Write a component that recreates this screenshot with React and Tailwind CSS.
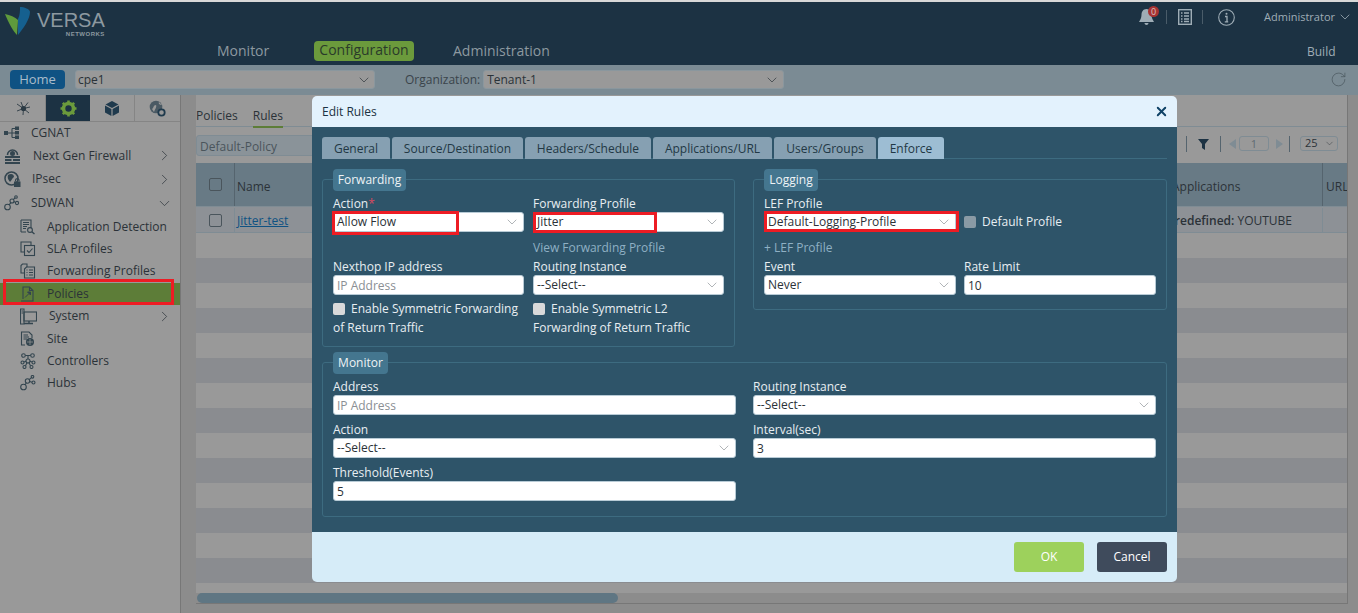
import { ChevronDown, ChevronRight, RotateCw, X } from "lucide-react";

const font = { fontFamily: '"Open Sans", "Noto Sans", sans-serif' };

// little line icons, drawn by hand since the packages don't have these
const stroke = { fill: "none", stroke: "currentColor", strokeWidth: 1.1 };

const CgnatIcon = () => (
  <svg width="16" height="14" viewBox="0 0 16 14">
    <rect x="0" y="5" width="4" height="4" fill="currentColor" />
    <path d="M4 7 H8 M8 2.5 V11.5 M8 2.5 H11 M8 7 H11 M8 11.5 H11" {...stroke} />
    <rect x="11" y="0.5" width="4" height="3.5" fill="currentColor" />
    <rect x="11" y="5" width="4" height="3.5" fill="currentColor" />
    <rect x="11" y="9.5" width="4" height="3.5" fill="currentColor" />
  </svg>
);
const FirewallIcon = () => (
  <svg width="17" height="17" viewBox="0 0 17 17">
    <path d="M3.5 8 A5 5 0 1 1 13.5 8" fill="none" stroke="currentColor" strokeWidth="1.6" />
    <circle cx="8.5" cy="6.5" r="2.5" fill="currentColor" />
    <path d="M1 9 H16 V11 H1 Z M1 12 H7.5 V14 H1 Z M9 12 H16 V14 H9 Z M1 15 H16 V17 H1 Z" fill="currentColor" />
  </svg>
);
const IpsecIcon = () => (
  <svg width="17" height="17" viewBox="0 0 17 17">
    <circle cx="7.5" cy="7.5" r="6.5" fill="none" stroke="currentColor" strokeWidth="1.5" />
    <path d="M4 4 C7 2 10 3 10 6 C8 7 8 9 6 11 C5 9 3 8 4 4 Z" fill="currentColor" />
    <rect x="10" y="10.5" width="6.5" height="5.5" fill="currentColor" />
    <path d="M11.5 10.5 V9 A1.8 1.8 0 0 1 15 9 V10.5" {...stroke} />
  </svg>
);
const NodesIcon = () => (
  <svg width="16" height="16" viewBox="0 0 16 16">
    <circle cx="3.5" cy="12" r="2.8" {...stroke} />
    <circle cx="8" cy="6" r="2" {...stroke} />
    <circle cx="13" cy="8" r="1.6" {...stroke} />
    <circle cx="12" cy="2" r="1.3" {...stroke} />
    <path d="M5 9.8 L7 7.6 M10 6.6 L11.6 7.4 M9.3 4.6 L11 2.8" {...stroke} />
  </svg>
);
const AppDetectIcon = () => (
  <svg width="16" height="16" viewBox="0 0 16 16">
    <path d="M1 1 H11 V9 M6 13 H1 Z M1 1 V13" {...stroke} />
    <path d="M3 3.5 H9 M3 5.5 H9 M3 7.5 H7 M3 9.5 H6" fill="none" stroke="currentColor" strokeWidth="1.2" />
    <circle cx="10" cy="11" r="2.4" {...stroke} />
    <path d="M11.8 12.8 L14.5 15" fill="none" stroke="currentColor" strokeWidth="1.4" />
  </svg>
);
const SlaIcon = () => (
  <svg width="16" height="16" viewBox="0 0 16 16">
    <path d="M4 11 H1 V1 H11 V4" {...stroke} />
    <rect x="4.5" y="4.5" width="10" height="10" {...stroke} />
    <path d="M7 9.5 L9 11.5 L12.5 7.5" {...stroke} />
  </svg>
);
const ForwardProfileIcon = () => (
  <svg width="16" height="16" viewBox="0 0 16 16">
    <path d="M4 10 H1 V2.5 L2.5 1 H7 V4" {...stroke} />
    <path d="M4.5 6 L6.5 4 H14.5 V15 H4.5 Z" {...stroke} />
    <path d="M6.5 7 H7.5 M9 7 H13 M6.5 9.5 H7.5 M9 9.5 H13 M6.5 12 H7.5 M9 12 H13" {...stroke} />
  </svg>
);
const PolicyIcon = () => (
  <svg width="16" height="16" viewBox="0 0 16 16">
    <path d="M3 13 V1 H9.5 L13 4.5 V15 H1" {...stroke} />
    <path d="M9.5 1 V4.5 H13" {...stroke} />
    <path d="M5 11.5 L9 7.5 L7.5 6 L10.5 6 L10.5 9 L9 7.5" fill="currentColor" stroke="currentColor" strokeWidth="1" />
  </svg>
);
const SystemIcon = () => (
  <svg width="17" height="17" viewBox="0 0 17 17">
    <path d="M0.5 1 H4 V16 H0.5 Z" {...stroke} />
    <path d="M1.5 3 H3 M1.5 5 H3" {...stroke} />
    <rect x="4" y="4" width="12.5" height="9" {...stroke} />
    <path d="M4 15.5 H13 M9 13 V15.5" fill="none" stroke="currentColor" strokeWidth="1.4" />
  </svg>
);
const SiteIcon = () => (
  <svg width="16" height="16" viewBox="0 0 16 16">
    <path d="M5 14 H1.5 V1 H9 L12 4 V7" {...stroke} />
    <path d="M3.5 4 H8 M3.5 6 H9 M3.5 8 H7" {...stroke} />
    <circle cx="10" cy="11" r="4" fill="currentColor" />
    <path d="M7 11 H13 M10 8 V14" fill="none" stroke="#999999" strokeWidth="0.7" />
  </svg>
);
const ControllersIcon = () => (
  <svg width="16" height="16" viewBox="0 0 16 16">
    <circle cx="3.5" cy="2.5" r="1.8" {...stroke} />
    <circle cx="12.5" cy="2.5" r="1.8" {...stroke} />
    <circle cx="8" cy="8" r="2" {...stroke} />
    <circle cx="2.5" cy="9.5" r="1.5" {...stroke} />
    <circle cx="13.5" cy="9.5" r="1.5" {...stroke} />
    <circle cx="4.5" cy="14" r="1.5" {...stroke} />
    <circle cx="11.5" cy="14" r="1.5" {...stroke} />
    <path d="M5.3 2.5 H10.7 M8 2.5 V6 M4 9 L6 8.3 M12 9 L10 8.3 M5.5 12.8 L7 9.8 M10.5 12.8 L9 9.8" {...stroke} />
  </svg>
);
const HubsIcon = () => (
  <svg width="16" height="16" viewBox="0 0 16 16">
    <circle cx="3.5" cy="12" r="2.8" {...stroke} />
    <circle cx="7.5" cy="6" r="2.2" {...stroke} />
    <circle cx="13.5" cy="7.5" r="1.5" {...stroke} />
    <circle cx="12.5" cy="1.8" r="1.3" {...stroke} />
    <path d="M5 9.8 L6.4 7.8 M9.7 6.5 L12 7.2 M9.2 4.6 L11.4 2.6" {...stroke} />
  </svg>
);

const sideItems = [
  { label: "CGNAT", icon: CgnatIcon, row: "h-[22px] pl-[4px]", gap: "w-[27px]" },
  { label: "Next Gen Firewall", icon: FirewallIcon, row: "h-[23px] pl-[4px]", gap: "w-[29px]", arrow: "right" },
  { label: "IPsec", icon: IpsecIcon, row: "h-[24px] pl-[4px]", gap: "w-[28px]", arrow: "right" },
  { label: "SDWAN", icon: NodesIcon, row: "h-[25px] pl-[4px] pb-[1px]", gap: "w-[27px]", arrow: "down" },
  { label: "Application Detection", icon: AppDetectIcon, row: "h-[22px] pl-[20px]", gap: "w-[27px]" },
  { label: "SLA Profiles", icon: SlaIcon, row: "h-[22px] pl-[20px]", gap: "w-[27px]" },
  { label: "Forwarding Profiles", icon: ForwardProfileIcon, row: "h-[23px] pl-[20px] pb-[1px]", gap: "w-[27px]" },
  { label: "Policies", icon: PolicyIcon, row: "h-[22px] pl-[20px] pb-[1px] bg-[#5d7d38]", gap: "w-[27px]" },
  { label: "System", icon: SystemIcon, row: "h-[22px] pl-[20px]", gap: "w-[29px]", arrow: "right" },
  { label: "Site", icon: SiteIcon, row: "h-[23px] pl-[20px]", gap: "w-[27px]" },
  { label: "Controllers", icon: ControllersIcon, row: "h-[22px] pl-[20px]", gap: "w-[27px]" },
  { label: "Hubs", icon: HubsIcon, row: "h-[22px] pl-[20px]", gap: "w-[27px]" },
];

const tabs = [
  { label: "General", w: "w-[68px]" },
  { label: "Source/Destination", w: "w-[131px]" },
  { label: "Headers/Schedule", w: "w-[126px]" },
  { label: "Applications/URL", w: "w-[119px]" },
  { label: "Users/Groups", w: "w-[102px]" },
  { label: "Enforce", w: "w-[66px]", active: true },
];

function VersaLogo() {
  return (
    <div className="flex items-start pl-[5px] pt-[5px] w-[200px]">
      <svg width="26" height="29" viewBox="0 0 26 29" className="shrink-0">
        <path d="M0 7 C5 8 10 10 13 13 L12 28 C8 24 3 15 0 7 Z" fill="#5f9a3c" />
        <path d="M15 0 C19 0 25 2 25 5 C25 12 18 22 13 28 L13 12 C15 8 15 4 15 0 Z" fill="#15608f" />
      </svg>
      <div className="ml-[6px] pt-[2px] flex flex-col items-end text-[#8d99a0] font-['Liberation_Sans']">
        <span className="text-[20px] leading-[22px]">VERSA</span>
        <span className="text-[6px] leading-[6px] font-bold tracking-[0.5px]">NETWORKS</span>
      </div>
    </div>
  );
}

function Header() {
  return (
    <div className="h-[65px] shrink-0 border-t-2 border-[#d8d8d8] bg-[#1c3243] relative">
      <div className="h-[30px] flex">
        <VersaLogo />
        <div className="ml-auto flex items-center text-[#9fadb6]">
          <div className="relative mr-[11px]">
            <svg width="17" height="18" viewBox="0 0 17 18">
              <path d="M8.5 1 C12 1 13.5 4 13.5 7 C13.5 10 15 12 16 14 H1 C2 12 3.5 10 3.5 7 C3.5 4 5 1 8.5 1 Z M6.5 15 H10.5 C10.5 17.500 6.5 17.500 6.5 15 Z" fill="#9fadb6" />
            </svg>
            <span className="absolute -top-[2px] left-[10px] w-[11px] h-[11px] rounded-full bg-[#a83232] text-[#d9c2c2] text-[9px] leading-[11px] text-center">0</span>
          </div>
          <div className="w-px h-[14px] bg-[#4a5c69] mr-[11px]" />
          <svg width="14" height="16" viewBox="0 0 14 16" className="mr-[10px]">
            <rect x="0.7" y="0.7" width="12.6" height="14.6" fill="none" stroke="#9fadb6" strokeWidth="1.4" />
            <path d="M3 4 H4.500 M6 4 H11 M3 7 H4.500 M6 7 H11 M3 10 H4.500 M6 10 H11 M3 12.500 H4.500 M6 12.500 H11" stroke="#9fadb6" strokeWidth="1.3" />
          </svg>
          <div className="w-px h-[14px] bg-[#4a5c69] mr-[15px]" />
          <svg width="17" height="17" viewBox="0 0 17 17" className="mr-[29px]">
            <circle cx="8.5" cy="8.5" r="7.8" fill="none" stroke="#9fadb6" strokeWidth="1.1" />
            <path d="M7 7.500 H9 V12.500 M6.800 12.800 H10.200" fill="none" stroke="#9fadb6" strokeWidth="1.3" />
            <circle cx="8.500" cy="4.800" r="1" fill="#9fadb6" />
          </svg>
          <span className="text-[11px] mr-[2px]">Administrator</span>
          <ChevronDown size={16} strokeWidth={1.2} className="mr-[5px]" />
        </div>
      </div>
      <div className="absolute left-[217px] top-[38px] flex items-center h-[20px] text-[14px] text-[#8d99a0]">
        <span className="w-[97px]">Monitor</span>
        <span className="w-[100px] h-[20px] mt-[2px] rounded-[4px] bg-[#6b9a3c] text-[#2a3a2a] text-center leading-[18px]">Configuration</span>
        <span className="ml-[39px]">Administration</span>
      </div>
      <span className="absolute left-[1307px] top-[41px] text-[12px] text-[#9fadb6]">Build</span>
    </div>
  );
}

function SubBar() {
  return (
    <div className="h-[30px] shrink-0 bg-[#7b8b94] flex items-center pl-[10px] pb-[1px] text-[12px] text-[#2a3238]">
      <span className="w-[55px] h-[19px] rounded-[4px] bg-[#0f5283] text-[#a9bccb] text-[13px] leading-[19px] text-center">Home</span>
      <div className="ml-[10px] w-[300px] h-[19px] rounded-[3px] bg-[#999999] border border-[#8a979e] flex items-center pl-[2px]">
        <span>cpe1</span>
        <ChevronDown size={16} strokeWidth={1} className="ml-auto mr-[2px]" />
      </div>
      <span className="ml-[30px] text-[#3a444b]">Organization:</span>
      <div className="ml-[3px] w-[301px] h-[19px] rounded-[3px] bg-[#999999] border border-[#8a979e] flex items-center pl-[3px]">
        <span>Tenant-1</span>
        <ChevronDown size={16} strokeWidth={1} className="ml-auto mr-[3px]" />
      </div>
      <RotateCw size={17} strokeWidth={1} className="ml-auto mr-[11px] text-[#4a565d]" />
    </div>
  );
}

function Sidebar() {
  return (
    <div className="w-[181px] shrink-0 bg-[#999999] border-r border-[#777777] text-[12px] text-[#2b3238]">
      <div className="h-[27px] flex border-b border-[#858585] pl-px">
        <div className="w-[45px] flex items-center justify-center border-r border-[#858585] text-[#2b3a44]">
          <svg width="15" height="15" viewBox="0 0 15 15">
            <path d="M7.500 7.500 L1 3 M7.500 7.500 L5 1 M7.500 7.500 L12 1.500 M7.500 7.500 L14 6 M7.500 7.500 L13 12 M7.500 7.500 L7 14 M7.500 7.500 L1 10" stroke="currentColor" strokeWidth="0.9" />
            <circle cx="7.500" cy="7.500" r="2.600" fill="currentColor" />
          </svg>
        </div>
        <div className="w-[44px] bg-[#1c3243] flex items-center justify-center">
          <svg width="17" height="17" viewBox="0 0 17 17">
            <circle cx="8.500" cy="8.500" r="5" fill="none" stroke="#6b9a3c" strokeWidth="3.600" />
            <path d="M8.500 0.500 V3 M8.500 14 V16.500 M0.500 8.500 H3 M14 8.500 H16.500 M2.800 2.800 L4.500 4.500 M12.500 12.500 L14.200 14.200 M14.200 2.800 L12.500 4.500 M4.500 12.500 L2.800 14.200" stroke="#6b9a3c" strokeWidth="2.600" />
          </svg>
        </div>
        <div className="w-[45px] flex items-center justify-center border-r border-[#858585]">
          <svg width="14" height="15" viewBox="0 0 14 15">
            <path d="M7 0 L13.500 3.500 L7 7 L0.500 3.500 Z" fill="#1f3a4d" />
            <path d="M0 4.500 L6.400 8 V15 L0 11.500 Z M14 4.500 L7.600 8 V15 L14 11.500 Z" fill="#1f3a4d" />
          </svg>
        </div>
        <div className="w-[45px] flex items-center justify-center">
          <svg width="17" height="17" viewBox="0 0 17 17">
            <circle cx="7" cy="7" r="6.300" fill="#4b5a64" />
            <path d="M3 9 C5 8 4 5 7 5 C8 7 6 9 5 12 Z M10 2 C9 4 11 5 13 5" fill="#999999" />
            <circle cx="12.500" cy="12.500" r="3.200" fill="#999999" stroke="#1f3a4d" strokeWidth="1.800" />
          </svg>
        </div>
      </div>
      {sideItems.map((item) => {
        const Icon = item.icon;
        return (
          <div key={item.label} className={`flex items-center ${item.row}`}>
            <div className={`${item.gap} shrink-0 text-[#33454f]`}>
              <Icon />
            </div>
            <span>{item.label}</span>
            {item.arrow === "right" && <ChevronRight size={17} strokeWidth={1} className="ml-auto mr-[7px]" />}
            {item.arrow === "down" && <ChevronDown size={17} strokeWidth={1} className="ml-auto mr-[7px]" />}
          </div>
        );
      })}
    </div>
  );
}

function Content() {
  return (
    <div className="flex-1 min-w-0 bg-[#8c8c8c] pl-[15px] pr-[10px] pb-[9px] text-[12px] text-[#2b3238]">
      <div className="h-full bg-[#999999] border-b border-r border-[#777777] flex flex-col">
        <div className="h-[32px] shrink-0 flex items-end border-b border-[#7f8c94]">
          <span className="pb-[1px] mr-[15px]">Policies</span>
          <span className="pb-[1px] relative">
            Rules
            <span className="absolute left-0 right-0 -bottom-[2px] h-[2px] bg-[#5d7d38]" />
          </span>
        </div>
        <div className="h-[36px] shrink-0 relative flex items-start pt-[8px]">
          <div className="w-[120px] h-[21px] rounded-[3px] bg-[#8a9399] border border-[#7f8c94] pl-[3px] leading-[22px] text-[#4a555c]">Default-Policy</div>
          <div className="ml-auto flex items-center h-[17px] pr-[9px]">
            <div className="w-px h-[16px] bg-[#55646e] mr-[11px]" />
            <svg width="12" height="12" viewBox="0 0 12 12" className="mr-[10px]"><path d="M0 1 H11 L7 6 V12 L4 10 V6 Z" fill="#1c3243" /></svg>
            <div className="w-px h-[16px] bg-[#55646e] mr-[8px]" />
            <svg width="8" height="10" viewBox="0 0 8 10" className="mr-[2px]"><path d="M7 0 V10 L0 5 Z" fill="#7f8c94" /></svg>
            <div className="w-[30px] h-[15px] rounded-[3px] border border-[#7f8c94] text-center text-[11px] leading-[13px] text-[#5f6a71]">1</div>
            <svg width="8" height="10" viewBox="0 0 8 10" className="ml-[7px] mr-[3px]"><path d="M0 0 V10 L7 5 Z" fill="#7f8c94" /></svg>
            <div className="w-px h-[16px] bg-[#55646e] ml-[2px] mr-[10px]" />
            <div className="w-[38px] h-[15px] rounded-[3px] border border-[#7f8c94] flex items-center pl-[4px] text-[11px]">
              25
              <ChevronDown size={11} strokeWidth={1} className="ml-auto mr-[2px]" />
            </div>
          </div>
        </div>
        <div className="flex-1 min-h-0 flex flex-col">
          <div className="h-[44px] shrink-0 bg-[#687a85] flex items-center border-b border-[#7f8c94]">
            <div className="w-[39px] self-stretch border-r border-[#55646e] flex items-center justify-center pb-[1px]">
              <div className="w-[13px] h-[13px] rounded-[2px] border border-[#4a555c]" />
            </div>
            <span className="pl-[2px] pt-[5px]">Name</span>
            <span className="ml-auto w-[151px] pt-[5px] pl-[1px]">Applications</span>
            <span className="w-[25px] self-stretch border-l border-[#55646e] leading-[48px] pl-[3px] overflow-hidden">URL</span>
          </div>
          <div className="h-[26px] shrink-0 bg-[#8d9196] flex items-center border-b border-[#7f8c94] pt-[1px]">
            <div className="w-[39px] self-stretch border-r border-[#7f8c94] flex items-center justify-center">
              <div className="w-[13px] h-[13px] rounded-[2px] border border-[#4a555c]" />
            </div>
            <span className="pl-[2px] pt-[2px] text-[#0f5283] underline">Jitter-test</span>
            <span className="ml-auto pt-[2px]"><b className="font-semibold">Predefined:</b> YOUTUBE</span>
            <span className="w-[25px] self-stretch border-l border-[#7f8c94] ml-[30px]" />
          </div>
          {[0, 1, 2, 3, 4, 5, 6].map((n) => (
            <div key={n} className="shrink-0">
              <div className="h-[25px] bg-[#999999]" />
              <div className="h-[25px] bg-[#8a8c90]" />
            </div>
          ))}
          <div className="mt-auto h-[10px] shrink-0 bg-[#8c8c8c] relative">
            <div className="w-[421px] h-full rounded-full bg-[#5f7683] ml-px" />
          </div>
        </div>
      </div>
    </div>
  );
}

function Field({ label, children, required }) {
  return (
    <div>
      <div className="h-[17px] leading-[17px] text-[12px] text-[#e8eef2]">
        {label}
        {required && <span className="text-[#d9485f]">*</span>}
      </div>
      {children}
    </div>
  );
}

function TextBox({ value, placeholder }) {
  return (
    <div className={`h-[20px] rounded-[3px] bg-white border border-[#b8cbd6] pl-[3px] leading-[19px] text-[12px] ${placeholder ? "text-[#8a8f94]" : "text-[#2b3238]"}`}>
      {value || placeholder}
    </div>
  );
}

function SelectBox({ value }) {
  return (
    <div className="h-[20px] rounded-[3px] bg-white border border-[#b8cbd6] pl-[3px] flex items-center text-[12px] text-[#2b3238]">
      <span>{value}</span>
      <ChevronDown size={16} strokeWidth={1} className="ml-auto mr-[3px] text-[#8a8f94]" />
    </div>
  );
}

function Check({ children, muted }) {
  return (
    <span className="inline-flex items-center">
      <span className={`w-[12px] h-[12px] rounded-[2px] mr-[6px] shrink-0 ${muted ? "bg-[#8a9aa5]" : "bg-[#d9d9d9]"}`} />
      {children}
    </span>
  );
}

function Group({ title, legend, className, children }) {
  return (
    <div className={`relative border border-[#3d6b80] rounded-[3px] ${className}`}>
      <div className={`absolute -top-[11px] left-[10px] h-[22px] rounded-[4px] bg-[#44768f] text-[12px] leading-[22px] text-center text-[#eef3f6] ${legend}`}>
        {title}
      </div>
      {children}
    </div>
  );
}

function Annotation({ className }) {
  return <div className={`absolute border-[3px] border-[#ed1c24] pointer-events-none ${className}`} />;
}

function EditRulesModal() {
  return (
    <div className="absolute left-[312px] top-[96px] w-[865px] h-[486px] rounded-[5px] overflow-hidden flex flex-col text-[12px]">
      <div className="h-[31px] shrink-0 bg-[#e3f2fd] flex items-center pl-[10px] pr-[8px] text-[#1c3243]">
        <span>Edit Rules</span>
        <X size={15} strokeWidth={3} className="ml-auto text-[#0f4266]" />
      </div>

      <div className="flex-1 bg-[#2e5469] px-[10px] pt-[10px] text-[#e8eef2]">
        <div className="h-[22px] flex gap-[2px] border-b border-[#3d6b80]">
          {tabs.map((t) => (
            <div
              key={t.label}
              className={`${t.w} h-[22px] rounded-t-[3px] text-center leading-[23px] ${t.active ? "bg-[#9dbdd3]" : "bg-[#86a0b2]"} text-[#223845]`}
            >
              {t.label}
            </div>
          ))}
        </div>

        <div className="flex items-start justify-between mt-[20px]">
          <Group title="Forwarding" legend="w-[73px]" className="w-[413px] h-[168px] px-[10px] pt-[15px]">
            <div className="grid grid-cols-[191px_191px] gap-x-[9px]">
              <div className="relative">
                <Field label="Action" required><SelectBox value="Allow Flow" /></Field>
                <Annotation className="-left-[1px] top-[16px] w-[127px] h-[24px]" />
              </div>
              <div className="relative">
                <Field label="Forwarding Profile"><SelectBox value="Jitter" /></Field>
                <Annotation className="left-0 top-[17px] w-[124px] h-[21px]" />
              </div>
              <div className="h-[26px] col-start-2 leading-[31px] text-[#8fb0c4]">View Forwarding Profile</div>
              <Field label="Nexthop IP address"><TextBox placeholder="IP Address" /></Field>
              <Field label="Routing Instance"><SelectBox value="--Select--" /></Field>
              <div className="mt-[5px] leading-[18px] whitespace-nowrap">
                <Check>Enable Symmetric Forwarding</Check>
                <div className="-mt-[1px]">of Return Traffic</div>
              </div>
              <div className="mt-[5px] leading-[18px] whitespace-nowrap">
                <Check>Enable Symmetric L2</Check>
                <div className="-mt-[1px]">Forwarding of Return Traffic</div>
              </div>
            </div>
          </Group>

          <Group title="Logging" legend="w-[54px]" className="w-[414px] h-[131px] px-[10px] pt-[15px]">
            <div className="grid grid-cols-[192px_192px] gap-x-[8px]">
              <div className="relative">
                <Field label="LEF Profile"><SelectBox value="Default-Logging-Profile" /></Field>
                <Annotation className="left-0 top-[16px] w-[195px] h-[21px]" />
              </div>
              <div className="pt-[17px] h-[37px] flex items-center"><Check muted>Default Profile</Check></div>
              <div className="h-[26px] col-span-2 leading-[31px] text-[#8fb0c4]">+ LEF Profile</div>
              <Field label="Event"><SelectBox value="Never" /></Field>
              <Field label="Rate Limit"><TextBox value="10" /></Field>
            </div>
          </Group>
        </div>

        <Group title="Monitor" legend="w-[55px]" className="h-[155px] mt-[15px] px-[10px] pt-[15px]">
          <div className="grid grid-cols-[403px_403px] gap-x-[17px] gap-y-[6px]">
            <Field label="Address"><TextBox placeholder="IP Address" /></Field>
            <Field label="Routing Instance"><SelectBox value="--Select--" /></Field>
            <Field label="Action"><SelectBox value="--Select--" /></Field>
            <Field label="Interval(sec)"><TextBox value="3" /></Field>
            <Field label="Threshold(Events)"><TextBox value="5" /></Field>
          </div>
        </Group>
      </div>

      <div className="h-[50px] shrink-0 bg-[#d6ecf8] flex items-center justify-end gap-[13px] pr-[10px]">
        <span className="w-[70px] h-[30px] rounded-[3px] bg-[#9dd15c] text-white text-center leading-[30px]">OK</span>
        <span className="w-[70px] h-[30px] rounded-[3px] bg-[#3f4b5c] text-white text-center leading-[30px]">Cancel</span>
      </div>
    </div>
  );
}

export default function App() {
  return (
    <div style={font} className="relative w-[1358px] h-[613px] overflow-hidden flex flex-col bg-[#8c8c8c]">
      <Header />
      <SubBar />
      <div className="flex-1 min-h-0 flex">
        <Sidebar />
        <Content />
      </div>
      {/* red box drawn over the screenshot */}
      <Annotation className="left-[3px] top-[279px] w-[171px] h-[26px]" />
      <EditRulesModal />
    </div>
  );
}
